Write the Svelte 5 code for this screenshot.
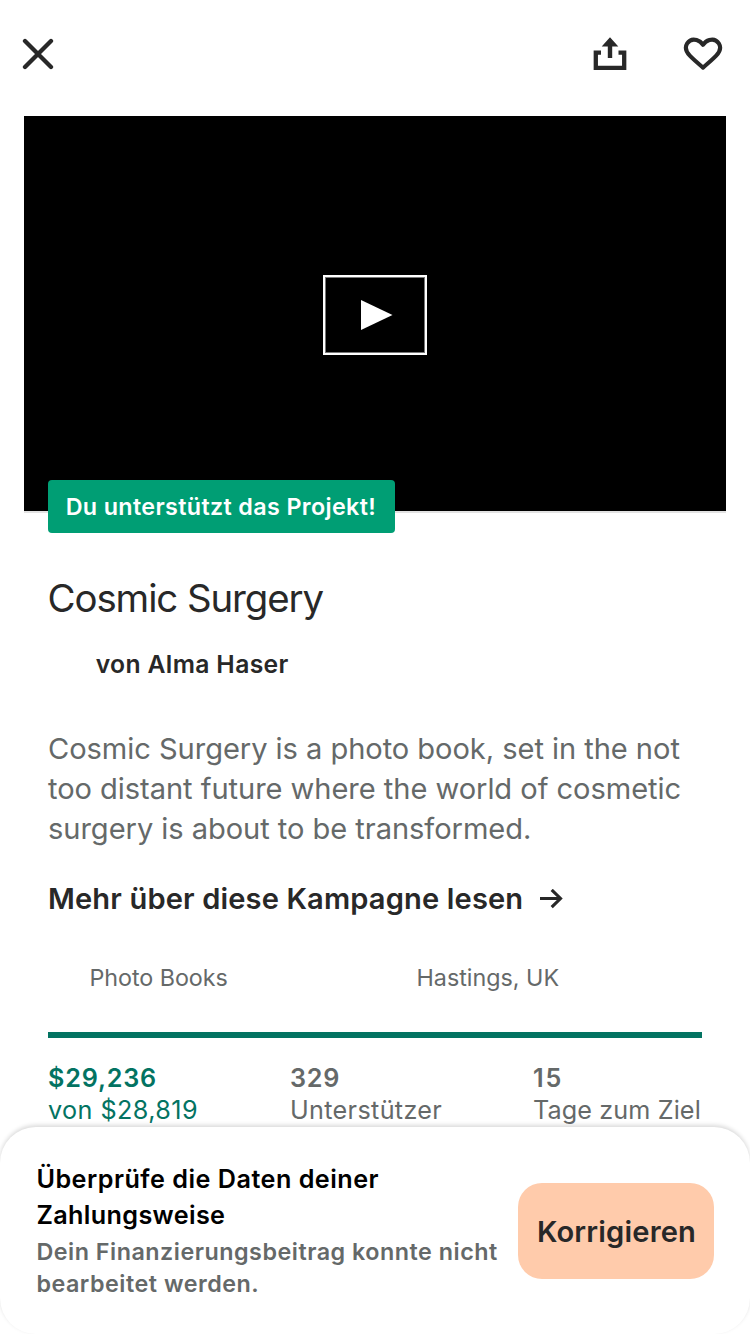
<script>
  const stats = [
    { value: '$29,236', label: 'von $28,819', tone: 'funded' },
    { value: '329', label: 'Unterstützer', tone: 'backers' },
    { value: '15', label: 'Tage zum Ziel', tone: 'days' }
  ];
</script>

<div class="screen">
  <header>
    <button class="icon close" aria-label="Schließen">
      <svg width="32" height="32" viewBox="0 0 32 32"><path d="M3 3 29 29M29 3 3 29" fill="none" stroke="#282828" stroke-width="4.3" stroke-linecap="round" /></svg>
    </button>
    <button class="icon share" aria-label="Teilen">
      <svg width="34" height="34" viewBox="0 0 34 34">
        <path d="M8 15.7H2.8V30.8H31.2V15.7H25.5" fill="none" stroke="#282828" stroke-width="4.3" />
        <path d="M17 .2 25.3 9.5H19.2V21H14.8V9.5H8.7Z" fill="#282828" />
      </svg>
    </button>
    <button class="icon" aria-label="Merken">
      <svg width="40" height="34" viewBox="0 0 40 34"><path d="M20 30.6C16 27.2 10.7 22.8 6.8 18.7C3 14.7 1.8 10.2 4.2 6.4C6.2 3.3 10 2 13.6 3C16.3 3.8 18.4 5.4 20 7.8C21.6 5.4 23.7 3.8 26.4 3C30 2 33.8 3.3 35.8 6.4C38.2 10.2 37 14.7 33.2 18.7C29.3 22.8 24 27.2 20 30.6Z" fill="none" stroke="#282828" stroke-width="4.1" stroke-linejoin="round" /></svg>
    </button>
  </header>

  <section class="video">
    <div class="play">
      <svg width="32" height="30" viewBox="0 0 32 30"><path d="M0 0 31.5 15 0 30Z" fill="#fff" /></svg>
    </div>
    <span class="badge">Du unterstützt das Projekt!</span>
  </section>

  <main>
    <h1>Cosmic Surgery</h1>
    <p class="author">von Alma Haser</p>
    <p class="blurb">Cosmic Surgery is a photo book, set in the not<br />too distant future where the world of cosmetic<br /><span>surgery is about to be transformed.</span></p>
    <div class="more">
      <span>Mehr über diese Kampagne lesen</span>
      <svg width="24" height="20" viewBox="0 0 24 20"><path d="M0 9.5H20.5M11.7 .9 20.5 9.5 11.7 18.1" fill="none" stroke="#282828" stroke-width="3.1" /></svg>
    </div>
    <div class="meta">
      <span class="category">Photo Books</span>
      <span class="place">Hastings, UK</span>
    </div>
    <div class="progress"></div>
    <div class="stats">
      {#each stats as stat}
        <div class="stat {stat.tone}">
          <b>{stat.value}</b>
          <span>{stat.label}</span>
        </div>
      {/each}
    </div>
  </main>

  <aside>
    <div class="notice">
      <p class="heading">Überprüfe die Daten deiner<br /><span>Zahlungsweise</span></p>
      <p class="detail">Dein Finanzierungsbeitrag konnte nicht<br />bearbeitet werden.</p>
    </div>
    <button class="fix">Korrigieren</button>
  </aside>
</div>

<style>
  :global(body) { background: #fff; }
  .screen {
    position: relative;
    box-sizing: border-box;
    width: 750px;
    height: 1334px;
    overflow: hidden;
    background: #fff;
    color: #282828;
    font-family: Inter, "Liberation Sans", sans-serif;
    white-space: nowrap;
  }
  h1, p { margin: 0; }
  svg { display: block; }
  button { border: 0; padding: 0; background: none; color: inherit; font: inherit; }
  header {
    box-sizing: border-box;
    height: 116px;
    padding: 0 27px 8px 22px;
    display: flex;
    align-items: center;
  }
  .close { margin-right: auto; }
  .share { margin-right: 56px; }
  .video {
    position: relative;
    height: 395px;
    margin: 0 24px;
    background: #000;
    box-shadow: 0 2px 0 #e2e2e2;
    display: grid;
    place-items: center;
  }
  .play {
    box-sizing: border-box;
    width: 104px;
    height: 80px;
    border: 2px solid #fff;
    box-shadow: inset 0 0 0 1px #777;
    padding: 0 0 0 3px;
    margin-top: 3px;
    display: grid;
    place-items: center;
  }
  .badge {
    position: absolute;
    left: 24px;
    top: 364px;
    box-sizing: border-box;
    width: 347px;
    height: 53px;
    padding-left: 17.7px;
    border-radius: 4px;
    background: #009e74;
    color: #fff;
    font-size: 23.3px;
    font-weight: 600;
    line-height: 53px;
    letter-spacing: 0.36px;
  }
  main { padding: 63px 48px 0; }
  h1 {
    font-size: 38.4px;
    font-weight: 400;
    line-height: 48px;
    letter-spacing: -1.08px;
    margin-left: -0.5px;
  }
  .author {
    margin: 26px 0 0 47.7px;
    font-size: 24.7px;
    font-weight: 600;
    line-height: 32px;
    letter-spacing: 0.36px;
  }
  .blurb {
    margin-top: 48.5px;
    font-size: 29.1px;
    line-height: 40px;
    letter-spacing: -0.06px;
    color: #656969;
  }
  .blurb span { letter-spacing: -0.06px; }
  .more {
    margin-top: 30px;
    display: flex;
    align-items: center;
    gap: 17px;
    font-size: 29.1px;
    font-weight: 600;
    line-height: 40px;
    letter-spacing: 0.14px;
  }
  .meta {
    display: grid;
    grid-template-columns: 327px 1fr;
    margin-top: 44px;
    padding-left: 41.5px;
    font-size: 23.3px;
    line-height: 30px;
    color: #656969;
  }
  .category { letter-spacing: -0.05px; }
  .progress { height: 6px; margin-top: 39.5px; background: #037362; }
  .stats {
    display: grid;
    grid-template-columns: 242px 243px 1fr;
    margin-top: 24px;
    font-size: 25.2px;
    line-height: 32px;
    color: #656969;
  }
  .stat { display: flex; flex-direction: column; }
  .stat b { font-weight: 600; letter-spacing: 0.8px; }
  .stat span { letter-spacing: 0.33px; }
  .funded { color: #037362; }
  .stat.funded span { letter-spacing: 0.42px; }
  .days b { letter-spacing: 1.8px; }
  .stat.days span { letter-spacing: 0.11px; }
  aside {
    position: absolute;
    left: 0;
    right: 0;
    bottom: 0;
    box-sizing: border-box;
    height: 207px;
    padding: 0 36px;
    border-radius: 36px;
    background: #fff;
    box-shadow: 0 -2px 4px rgba(0, 0, 0, 0.15);
    display: flex;
    justify-content: space-between;
    align-items: flex-start;
  }
  .notice { padding: 34px 0 0 0.4px; }
  .heading {
    font-size: 25.2px;
    font-weight: 600;
    line-height: 36px;
    letter-spacing: 0.49px;
    color: #000;
  }
  .heading span { letter-spacing: 0.36px; }
  .detail {
    margin-top: 2.5px;
    font-size: 23.3px;
    font-weight: 600;
    line-height: 32px;
    letter-spacing: 0.52px;
    color: #656969;
  }
  .fix {
    width: 196px;
    height: 96px;
    margin-top: 56px;
    padding-left: 1px;
    border-radius: 24px;
    background: #ffcbab;
    font-size: 29.1px;
    font-weight: 600;
    letter-spacing: 0.18px;
  }
</style>
